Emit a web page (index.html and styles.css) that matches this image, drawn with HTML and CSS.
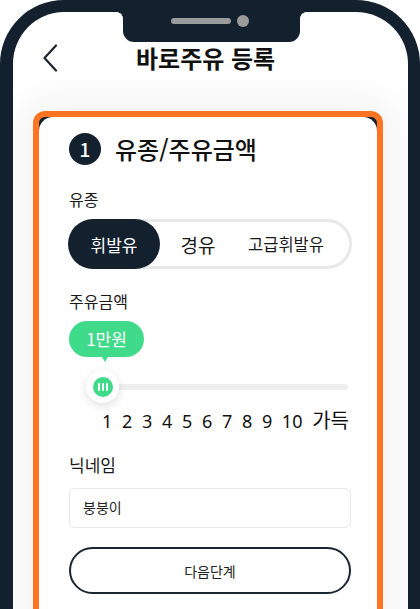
FILE: index.html
```html
<!DOCTYPE html>
<html lang="ko">
<head>
<meta charset="utf-8">
<title>바로주유 등록</title>
<link rel="stylesheet" href="styles.css">
</head>
<body>
<div class="phone">
  <div class="notch"><span class="speaker"></span><span class="camera"></span></div>
  <header class="topbar">
    <svg class="back" width="16" height="28" viewBox="0 0 16 28"><path d="M14 1.5 L2.5 14 L14 26.5" fill="none" stroke="#1c2430" stroke-width="2.2" stroke-linecap="round" stroke-linejoin="round"/></svg>
    <h1 class="title">바로주유 등록</h1>
  </header>
  <main class="content">
    <div class="card-frame">
      <section class="card">
        <div class="step">
          <span class="step-num">1</span>
          <h2 class="step-title">유종/주유금액</h2>
        </div>
        <p class="label label-fuel">유종</p>
        <div class="seg">
          <span class="seg-item seg-active">휘발유</span>
          <span class="seg-item seg-diesel">경유</span>
          <span class="seg-item seg-premium">고급휘발유</span>
        </div>
        <p class="label label-amount">주유금액</p>
        <div class="bubble">1만원</div>
        <div class="slider">
          <span class="track"></span>
          <span class="thumb"><span class="grip"><i></i><i></i><i></i></span></span>
        </div>
        <div class="ticks">
          <span>1</span><span>2</span><span>3</span><span>4</span><span>5</span><span>6</span><span>7</span><span>8</span><span>9</span><span>10</span><span class="full">가득</span>
        </div>
        <p class="label label-nick">닉네임</p>
        <div class="input">붕붕이</div>
        <button class="next" type="button">다음단계</button>
      </section>
    </div>
  </main>
</div>
</body>
</html>
```

FILE: styles.css
```css
html, body {
  margin: 0;
  padding: 0;
  width: 420px;
  height: 609px;
  overflow: hidden;
  background: #fff;
}
body {
  font-family: "Noto Sans CJK KR", "Noto Sans", sans-serif;
  color: #1a1a1a;
}
.phone {
  box-sizing: border-box;
  width: 420px;
  height: 700px;
  border-style: solid;
  border-color: #13212f;
  border-width: 12px 12px 0 13px;
  border-radius: 64px 64px 0 0;
  background: #fff;
  overflow: hidden;
}
.notch {
  position: relative;
  width: 177px;
  height: 30px;
  margin-left: 110px;
  background: #13212f;
  border-radius: 0 0 11px 11px;
  display: flex;
  align-items: center;
  gap: 6px;
  padding-left: 48px;
  padding-bottom: 12px;
  box-sizing: border-box;
}
.notch::before,
.notch::after {
  content: "";
  position: absolute;
  top: 0;
  width: 6px;
  height: 6px;
}
.notch::before {
  left: -6px;
  background: radial-gradient(circle at 0 100%, transparent 5.5px, #13212f 6px);
}
.notch::after {
  right: -6px;
  background: radial-gradient(circle at 100% 100%, transparent 5.5px, #13212f 6px);
}
.speaker {
  width: 60px;
  height: 6px;
  border-radius: 3px;
  background: #9b9b9b;
}
.camera {
  width: 12px;
  height: 12px;
  border-radius: 50%;
  background: #9b9b9b;
}
.topbar {
  height: 32px;
  display: flex;
  align-items: center;
  padding-left: 29px;
}
.back {
  display: block;
  flex: none;
}
.title {
  margin: 0 0 0 78px;
  font-size: 24px;
  font-weight: 700;
  line-height: 32px;
  color: #111;
}
.content {
  padding-top: 37px;
}
.card-frame {
  margin-left: 20px;
  width: 350px;
  box-sizing: border-box;
  border: 6px solid #ff7321;
  border-radius: 12px;
  background: #13212f;
  box-shadow: 0 0 40px 12px rgba(0, 0, 0, 0.05);
}
.card {
  background: #fff;
  border-radius: 14px;
  padding: 16px 26px 40px 30px;
  height: 560px;
  box-sizing: border-box;
}
.step {
  display: flex;
  align-items: center;
  height: 32px;
}
.step-num {
  width: 32px;
  height: 32px;
  border-radius: 50%;
  background: #13212f;
  color: #fff;
  font-size: 19px;
  font-weight: 500;
  line-height: 32px;
  text-align: center;
  flex: none;
}
.step-title {
  margin: 0 0 0 14px;
  font-size: 24px;
  font-weight: 500;
  line-height: 32px;
  color: #111;
}
.label {
  margin: 0;
  font-size: 16px;
  line-height: 22px;
  color: #1a1a1a;
}
.label-fuel { margin-top: 23px; }
.label-amount { margin-top: 21px; }
.label-nick { margin-top: 22px; font-size: 17px; }
.seg {
  margin-top: 9px;
  height: 50px;
  box-sizing: border-box;
  border: 3px solid #e8e8e8;
  border-radius: 25px;
  display: flex;
  align-items: center;
  width: 284px;
  margin-left: -1px;
}
.seg-item {
  display: flex;
  align-items: center;
  justify-content: center;
  color: #1a1a1a;
}
.seg-active {
  margin: -3px 0 -3px -3px;
  width: 92px;
  height: 50px;
  border-radius: 25px;
  background: #13212f;
  color: #fff;
  font-size: 17px;
}
.seg-diesel {
  width: 76px;
  font-size: 19px;
}
.seg-premium {
  width: 100px;
  font-size: 16.5px;
}
.bubble {
  position: relative;
  margin-top: 9px;
  width: 75px;
  height: 36px;
  border-radius: 18px;
  background: #40db8a;
  color: #fff;
  font-size: 17px;
  font-weight: 400;
  line-height: 36px;
  text-align: center;
}
.bubble::after {
  content: "";
  position: absolute;
  left: 33px;
  top: 36px;
  border-left: 3px solid transparent;
  border-right: 3px solid transparent;
  border-top: 5px solid #40db8a;
}
.slider {
  position: relative;
  margin-top: 13px;
  height: 34px;
  display: flex;
  align-items: center;
  padding-left: 31px;
}
.track {
  width: 248px;
  height: 6px;
  border-radius: 3px;
  background: #efefef;
}
.thumb {
  position: absolute;
  left: 17px;
  top: 0;
  width: 33px;
  height: 33px;
  border-radius: 50%;
  background: #fff;
  box-shadow: 0 3px 10px rgba(0, 0, 0, 0.13);
  display: flex;
  align-items: center;
  justify-content: center;
}
.grip {
  width: 20px;
  height: 20px;
  border-radius: 50%;
  background: #40db8a;
  display: flex;
  align-items: center;
  justify-content: center;
  gap: 2px;
}
.grip i {
  width: 2px;
  height: 8px;
  background: #fff;
  border-radius: 1px;
}
.ticks {
  margin-top: 5px;
  margin-left: 33px;
  width: 247px;
  display: flex;
  justify-content: space-between;
  align-items: baseline;
  font-family: "Noto Sans", "Noto Sans CJK KR", sans-serif;
  font-size: 18px;
  line-height: 22px;
  font-weight: 400;
  color: #111;
}
.ticks .full {
  font-family: "Noto Sans CJK KR", sans-serif;
  font-size: 20px;
  font-weight: 400;
}
.input {
  margin-top: 12px;
  height: 40px;
  box-sizing: border-box;
  border: 1.5px solid #e9e9e9;
  border-radius: 6px;
  padding-left: 13px;
  font-size: 14px;
  line-height: 37px;
  color: #222;
}
.next {
  display: block;
  margin-top: 19px;
  width: 282px;
  height: 47px;
  box-sizing: border-box;
  border: 2px solid #1b2633;
  border-radius: 24px;
  background: #fff;
  font-family: "Noto Sans CJK KR", "Noto Sans", sans-serif;
  font-size: 14px;
  color: #222;
  padding: 0;
}
```
